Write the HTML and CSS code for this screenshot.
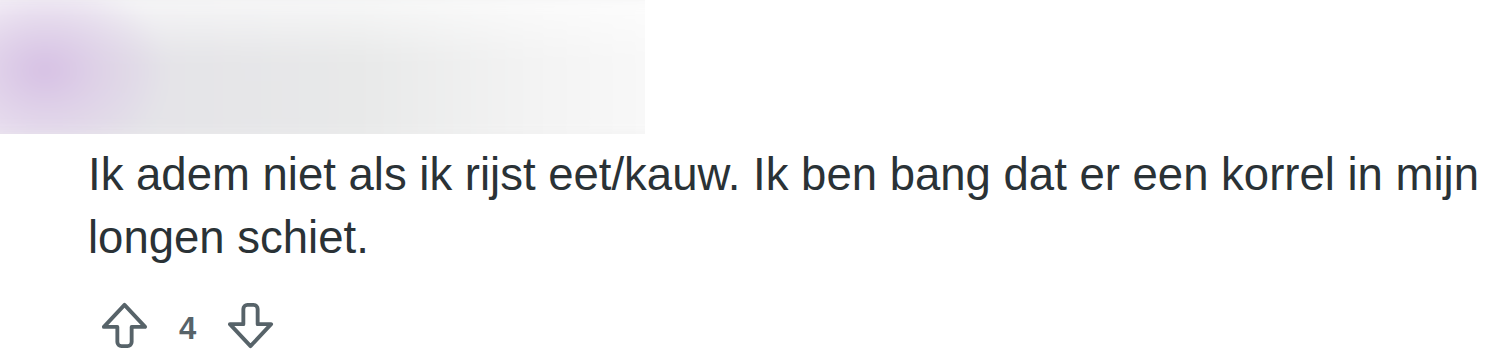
FILE: index.html
```html
<!DOCTYPE html>
<html lang="en">
<head>
    <meta charset="UTF-8">
    <title>Comment</title>
    <link rel="stylesheet" href="styles.css">
</head>
<body>
<div class="comment">
    <div class="author">
        <div class="author-blur"></div>
    </div>
    <p class="comment-text">Ik adem niet als ik rijst eet/kauw. Ik ben bang dat er een korrel in mijn longen schiet.</p>
    <div class="actions">
        <button class="vote" aria-label="Upvote">
            <svg viewBox="0 0 20 20" width="55" height="55"><path d="M10 2.5 L17.5 10.5 H12.6 V16 A1.5 1.5 0 0 1 11.1 17.5 H8.9 A1.5 1.5 0 0 1 7.4 16 V10.5 H2.5 Z" fill="none" stroke="currentColor" stroke-width="1.4" stroke-linejoin="round"/></svg>
        </button>
        <span class="score">4</span>
        <button class="vote" aria-label="Downvote">
            <svg viewBox="0 0 20 20" width="55" height="55"><path d="M10 17.5 L17.5 9.5 H12.6 V4 A1.5 1.5 0 0 0 11.1 2.5 H8.9 A1.5 1.5 0 0 0 7.4 4 V9.5 H2.5 Z" fill="none" stroke="currentColor" stroke-width="1.4" stroke-linejoin="round"/></svg>
        </button>
    </div>
</div>
</body>
</html>
```
FILE: styles.css
```css
body {
    margin: 0;
    background-color: #fff;
    font-family: "Liberation Sans", Arial, sans-serif;
    color: #2a3236;
}

.comment {
    width: 1488px;
    height: 364px;
    overflow: hidden;
}

.author {
    width: 645px;
    height: 134px;
    overflow: hidden;
    background-color: #eeeeef;
}

.author-blur {
    height: 100%;
    background:
        radial-gradient(ellipse 115px 90px at 65px 70px, rgba(214, 192, 228, 1) 0%, rgba(218, 200, 230, 0.7) 40%, rgba(225, 212, 235, 0) 100%),
        linear-gradient(180deg, rgba(255, 255, 255, 0.7) 0%, rgba(255, 255, 255, 0) 45%),
        linear-gradient(90deg, #efe8f3 0%, #e4e3e8 22%, #e8e9e9 55%, #f3f3f3 80%, #f9f9f9 100%);
    filter: blur(8px);
    transform: scale(1.08);
}

.comment-text {
    margin: 9px 0 0 88px;
    font-size: 45.5px;
    line-height: 63px;
}

.actions {
    display: flex;
    align-items: center;
    margin: 29px 0 0 97px;
    color: #576369;
}

.vote {
    display: flex;
    padding: 0;
    border: none;
    background: none;
    color: inherit;
}

.score {
    width: 71px;
    text-align: center;
    font-size: 31px;
    font-weight: 600;
    margin-top: 6px;
}
```
